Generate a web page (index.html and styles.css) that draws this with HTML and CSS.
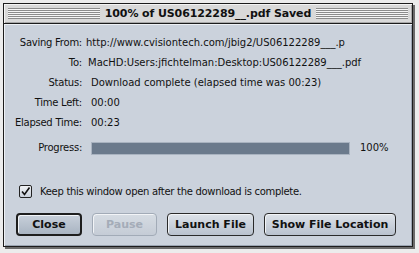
FILE: index.html
```html
<!DOCTYPE html>
<html>
<head>
<meta charset="utf-8">
<link rel="stylesheet" href="styles.css">
</head>
<body>
<div class="window">
  <div class="titlebar">
    <div class="stripes"></div>
    <div class="title">100% of US06122289__.pdf Saved</div>
    <div class="stripes"></div>
  </div>
  <div class="content">
    <div class="info">
      <div class="label">Saving From:</div><div class="value v-from">http://www.cvisiontech.com/jbig2/US06122289___.p</div>
      <div class="label">To:</div><div class="value v-to">MacHD:Users:jfichtelman:Desktop:US06122289___.pdf</div>
      <div class="label">Status:</div><div class="value v-ind">Download complete (elapsed time was 00:23)</div>
      <div class="label">Time Left:</div><div class="value v-ind">00:00</div>
      <div class="label">Elapsed Time:</div><div class="value v-ind">00:23</div>
    </div>
    <div class="progress-row">
      <div class="label">Progress:</div>
      <div class="bar"><div class="fill"></div></div>
      <div class="pct">100%</div>
    </div>
    <div class="check-row">
      <span class="checkbox">
        <svg width="11" height="11" viewBox="0 0 11 11"><path d="M2 5.5 L4.5 8.5 L9.5 1.5" fill="none" stroke="#111" stroke-width="1.6"/></svg>
      </span>
      <span class="check-label">Keep this window open after the download is complete.</span>
    </div>
    <div class="buttons">
      <button class="btn btn-default">Close</button>
      <button class="btn btn-disabled">Pause</button>
      <button class="btn btn-launch">Launch File</button>
      <button class="btn btn-show">Show File Location</button>
    </div>
  </div>
</div>
</body>
</html>
```

FILE: styles.css
```css
html, body {
  margin: 0;
  padding: 0;
}
body {
  background: #ececec;
  width: 419px;
  height: 253px;
  overflow: hidden;
  font-family: "DejaVu Sans", sans-serif;
  font-size: 10px;
  color: #111;
}
.window {
  margin: 3px 0 0 3px;
  width: 408px;
  height: 242px;
  border: 1px solid #1c1c1c;
  box-shadow: 2px 2px 0 #6a6a6a;
  background: #cbd2dc;
  display: flex;
  flex-direction: column;
}
.titlebar {
  height: 19px;
  background: #d9d9d9;
  border-bottom: 1px solid #1c1c1c;
  box-shadow: inset 1px 1px 0 #f4f4f4, inset -1px -1px 0 #a9a9a9;
  display: flex;
  align-items: center;
  padding: 0 4px;
  gap: 5px;
}
.stripes {
  flex: 1;
  height: 11px;
  background: repeating-linear-gradient(to bottom, #8c8c8c 0, #8c8c8c 1px, #f6f6f6 1px, #f6f6f6 2px);
}
.title {
  font-weight: bold;
  font-size: 11px;
  letter-spacing: -0.1px;
  color: #111;
  white-space: nowrap;
}
.content {
  flex: 1;
  padding: 9px 0 0 0;
  box-shadow: inset 1px 1px 0 #eef1f5, inset -1px -1px 0 #9aa4b1;
  display: flex;
  flex-direction: column;
}
.info {
  display: grid;
  grid-template-columns: 78px 1fr;
  column-gap: 4px;
  grid-auto-rows: 20px;
  align-items: center;
  line-height: 14px;
}
.label {
  text-align: right;
  white-space: nowrap;
  letter-spacing: -0.25px;
}
.value {
  white-space: nowrap;
}
.v-to {
  padding-left: 2px;
}
.v-ind {
  padding-left: 5px;
}
.progress-row {
  margin-top: 5px;
  height: 20px;
  display: flex;
  align-items: center;
  line-height: 14px;
}
.progress-row .label {
  width: 78px;
}
.bar {
  margin-left: 9px;
  width: 257px;
  height: 11px;
  border: 1px solid #a9b3c0;
  background: #6b7a8c;
}
.pct {
  margin-left: 10px;
}
.check-row {
  margin-top: 25px;
  margin-left: 15px;
  height: 16px;
  display: flex;
  align-items: center;
  gap: 8px;
}
.check-label {
  letter-spacing: -0.3px;
}
.checkbox {
  width: 11px;
  height: 11px;
  border: 1px solid #222;
  border-radius: 2px;
  background: linear-gradient(#f0f2f5, #c9d0da);
  display: flex;
  align-items: center;
  justify-content: center;
}
.buttons {
  margin-top: 14px;
  margin-left: 12px;
  display: flex;
  gap: 10px;
}
.btn {
  height: 23px;
  padding: 0;
  border: 1px solid #2a2a2a;
  border-radius: 4px;
  background: linear-gradient(#dde2e9, #b9c2ce);
  box-shadow: inset 1px 1px 0 #f2f4f7;
  font-family: "DejaVu Sans", sans-serif;
  font-weight: bold;
  font-size: 11px;
  color: #111;
}
.btn-default {
  width: 66px;
  border: 2px solid #1e1e1e;
  background: linear-gradient(#c8d0da, #a9b4c2);
}
.btn-disabled {
  width: 65px;
  border-color: #a2abb7;
  color: #a4acb8;
  background: linear-gradient(#d6dce3, #c5ccd6);
}
.btn-launch {
  width: 87px;
}
.btn-show {
  width: 132px;
}
```
